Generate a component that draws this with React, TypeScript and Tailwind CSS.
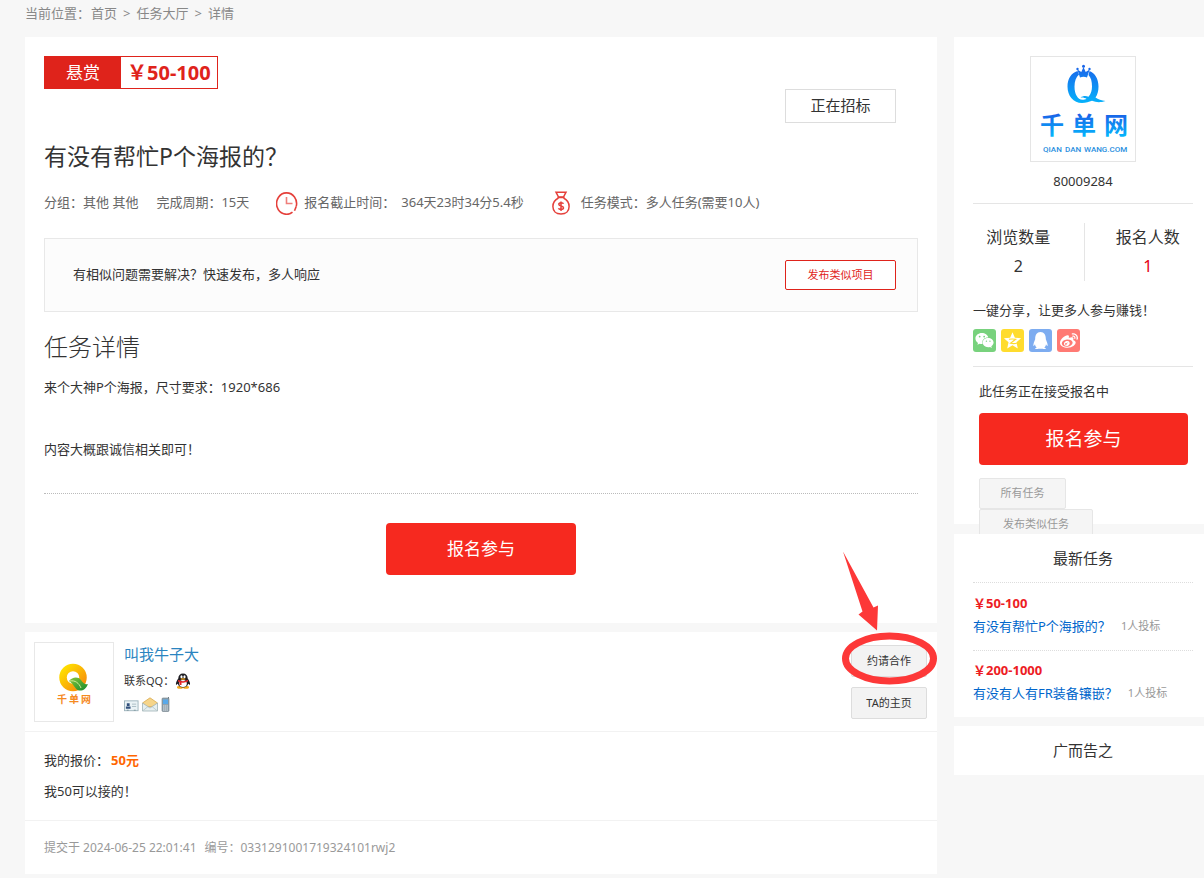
import type { ReactNode } from 'react'
import { FaQq, FaWeibo, FaWeixin } from 'react-icons/fa'

const latestTasks = [
	{ price: '￥50-100', title: '有没有帮忙P个海报的？', bids: '1人投标' },
	{ price: '￥200-1000', title: '有没有人有FR装备镶嵌？', bids: '1人投标' },
]

const BlueLogo = () => (
	<svg viewBox="0 0 104 104" className="size-full" role="img" aria-label="千单网">
		<defs>
			<linearGradient id="blue-q" x1="0" y1="10" x2="0" y2="46" gradientUnits="userSpaceOnUse">
				<stop offset="0" stopColor="#1a66ea" />
				<stop offset="1" stopColor="#06b2fb" />
			</linearGradient>
			<linearGradient id="blue-name" x1="0" y1="56" x2="0" y2="80" gradientUnits="userSpaceOnUse">
				<stop offset="0" stopColor="#1a5ee6" />
				<stop offset="1" stopColor="#04b8fd" />
			</linearGradient>
		</defs>
		<g fill="url(#blue-q)">
			<path d="M46.500 14C40 16 36.500 22 36.500 29.500C36.500 39 42.500 46 51 46C55 46 58 44.800 61 43.800C65 45.300 69 45.800 74.500 44C70.500 43.500 67 42.500 64.500 40.500C66.500 37.500 67.500 34 67.500 29.500C67.500 22 64 16 58.500 14L57.500 18C60 20.500 61 24.500 61 29.500C61 33 60 37 57.500 39.800C55 38.500 52 38.700 49.500 40.500C52 40.200 54 40.800 55.500 41.800C54.500 42.500 53 42.800 51.500 42.800C46.500 42.500 43.500 37 43.500 29.500C43.500 24.500 45 20 48 17.500Z" />
			<path d="M49 20.500L46.300 12.500L50.300 15L52.500 10L54.700 15L58.700 12.500L56 20.500Q52.500 18.800 49 20.500Z" />
			<circle cx="46.500" cy="12" r="1.200" />
			<circle cx="52.500" cy="9.300" r="1.500" />
			<circle cx="58.500" cy="12" r="1.200" />
		</g>
		<g
			fill="url(#blue-name)"
			textAnchor="middle"
			className="font-['Noto_Sans_CJK_SC',sans-serif] text-[24px] font-bold"
		>
			<text x="21" y="77">千</text>
			<text x="53" y="77">单</text>
			<text x="85" y="77">网</text>
		</g>
		<g fill="#2a8fe0" className="font-['Roboto',sans-serif] text-[8px] font-medium">
			<text x="12" y="95">QIAN</text>
			<text x="34" y="95">DAN</text>
			<text x="53" y="95">WANG.COM</text>
		</g>
	</svg>
)

const OrangeLogo = () => (
	<svg viewBox="0 0 78 78" className="size-full" role="img" aria-label="千单网">
		<defs>
			<linearGradient id="orange-ring" x1="0" y1="0" x2="1" y2="1">
				<stop offset="0" stopColor="#ffe100" />
				<stop offset="1" stopColor="#f78c0c" />
			</linearGradient>
			<linearGradient id="leaf" x1="0" y1="0" x2="1" y2="1">
				<stop offset="0" stopColor="#8bc63a" />
				<stop offset="1" stopColor="#138a2e" />
			</linearGradient>
		</defs>
		<circle cx="38" cy="34.500" r="10" fill="none" stroke="url(#orange-ring)" strokeWidth="7.500" />
		<path
			d="M34 38C37 34 43 33 46 37C48 40 50 42 53 41C51 46 48 48 44 47.500C40 47 40 42 34 38Z"
			fill="url(#leaf)"
		/>
		<path d="M35 38C40 37 44 40 46 45" fill="none" stroke="#d2ec9a" strokeWidth="1" />
		<g
			fill="#f58a1f"
			textAnchor="middle"
			className="font-['Noto_Sans_CJK_SC',sans-serif] text-[10px] font-bold"
		>
			<text x="27" y="60">千</text>
			<text x="39" y="60">单</text>
			<text x="51" y="60">网</text>
		</g>
	</svg>
)

const ClockIcon = () => (
	<svg viewBox="0 0 22 24" className="h-6 w-[22px]" fill="none" stroke="#e5403b" strokeWidth="1.600">
		<path d="M20.200 15.500A10 10.700 0 1 0 16.500 21.200" />
		<path d="M18.500 19.800L20.200 15.500" />
		<path d="M10.500 6V12.500H16.500" stroke="#ef7f7b" />
	</svg>
)

const MoneyBagIcon = () => (
	<svg viewBox="0 0 18 24" className="h-6 w-[18px]" fill="none" stroke="#e5403b" strokeWidth="1.500">
		<path d="M6.500 6L4 1.200H14L11.500 6Z" />
		<path d="M5.500 6.500H12.500" />
		<path d="M6.500 7C2.500 9 .9 12 .9 15.500C.9 20 4 23 9 23S17.100 20 17.100 15.500C17.100 12 15.500 9 11.500 7" />
		<path d="M11.500 12.800C11 11.300 6.800 11.200 6.800 13.300C6.800 15.500 11.500 14.500 11.500 16.800C11.500 19 7 18.800 6.500 17.200M9 10.500V20" />
	</svg>
)

const QzoneIcon = () => (
	<svg viewBox="0 0 24 24" className="size-[19px]">
		<path
			fill="#fff"
			d="M12 1.500L15 8.500L22.800 9.200L17 14.300L18.700 22L12 18L5.300 22L7 14.300L1.200 9.200L9 8.500Z"
		/>
		<path d="M7.500 10.500C10 10 13 10 16 10.500L9.500 15.500C12 16 15 16 17.500 15.500" fill="none" stroke="#ffdc2e" strokeWidth="1.400" />
	</svg>
)

const PenguinIcon = () => (
	<svg viewBox="0 0 16 16" className="size-4">
		<ellipse cx="5" cy="14.300" rx="3" ry="1.500" fill="#f6a81c" />
		<ellipse cx="11" cy="14.300" rx="3" ry="1.500" fill="#f6a81c" />
		<path d="M8 .5C5 .5 3.300 2.600 3.300 5.500C1.800 7.500.6 9.800 1 12L2.800 10.800C3.500 13.500 5.500 14.500 8 14.500S12.500 13.500 13.200 10.800L15 12C15.400 9.800 14.200 7.500 12.700 5.500C12.700 2.600 11 .5 8 .5Z" fill="#1d1d22" />
		<ellipse cx="8" cy="10.500" rx="3.800" ry="3.600" fill="#fff" />
		<ellipse cx="6.500" cy="3.800" rx="1.100" ry="1.500" fill="#fff" />
		<ellipse cx="9.500" cy="3.800" rx="1.100" ry="1.500" fill="#fff" />
		<ellipse cx="8" cy="6" rx="2.600" ry=".8" fill="#f6a81c" />
		<path d="M3.200 6.800C6 8.600 10 8.600 12.800 6.800L13.200 8.300C10 10 8 9.800 6.500 9.500V12H4.600V9.200L3 8.400Z" fill="#e3262b" />
	</svg>
)

const IdCardIcon = () => (
	<svg viewBox="0 0 16 12" className="h-3 w-[15px]">
		<rect x=".5" y=".5" width="14.500" height="10.500" fill="#eaf3f6" stroke="#9db4bc" />
		<path d="M3 3H6V6H3ZM2 6.500H7V9H2Z" fill="#31507c" />
		<path d="M8.500 4H13M8.500 6.500H13" stroke="#a9bcc2" />
		<path d="M3 10.500H5M10.500 10.500H12.500" stroke="#7f959d" />
	</svg>
)

const MailIcon = () => (
	<svg viewBox="0 0 16 15" className="h-[15px] w-4">
		<path d="M.5 6L8 .8L15.500 6L12 9.500H4Z" fill="#f6d58a" stroke="#d9a94e" strokeWidth=".8" />
		<path d="M.5 6V14H15.500V6L8 11Z" fill="#e6eff0" stroke="#9fb3b6" strokeWidth=".8" />
		<path d="M.8 13.800L6 9.500M15.200 13.800L10 9.500" stroke="#b4c4c6" strokeWidth=".8" />
	</svg>
)

const PhoneIcon = () => (
	<svg viewBox="0 0 9 15" className="h-[15px] w-[9px]">
		<path d="M7.500 0V3" stroke="#6d7c86" />
		<rect x="1" y="1" width="7" height="13.500" rx="1" fill="#93a3ad" stroke="#6d7c86" strokeWidth=".6" />
		<rect x="2" y="2.500" width="5" height="4.500" fill="#58a9ea" />
		<path d="M2 9H7M2 11H7M2 13H7" stroke="#dfe6ea" strokeWidth=".9" strokeDasharray="1.300 .5" />
	</svg>
)

/* Hand-drawn pointer around the invite button */
const Highlight = () => (
	<svg
		viewBox="0 0 96 136"
		className="pointer-events-none absolute -top-[94px] left-1/2 h-[136px] w-[96px] -translate-x-1/2"
		aria-hidden="true"
	>
		<path d="M2 .5L32.500 56.500L37 54.500L36 79.500L17.500 63.500L21.500 60.500Z" fill="#fd3838" />
		<ellipse cx="48.500" cy="107.500" rx="44" ry="22.500" fill="none" stroke="#fd3838" strokeWidth="7" />
	</svg>
)

const ShareButton = ({ label, color, children }: { label: string; color: string; children: ReactNode }) => (
	<button
		type="button"
		aria-label={label}
		className={`flex size-[23px] items-center justify-center rounded-[3px] text-white ${color}`}
	>
		{children}
	</button>
)

const TaskCard = () => (
	<section className="flex flex-col bg-white px-[19px] pt-[19px] pb-12">
		<div className="flex h-[33px] self-start border border-[#df231b] text-[#df231b]">
			<span className="flex w-[76px] items-center justify-center bg-[#df231b] text-[17px] text-white">悬赏</span>
			<strong className="flex items-center px-[6px] text-[20px] leading-none font-bold">￥50-100</strong>
		</div>
		<button
			type="button"
			className="mr-[22px] h-[34px] w-[111px] self-end border border-[#ddd] pb-[2px] text-[15px] text-[#333]"
		>
			正在招标
		</button>

		<h1 className="mt-4 text-[23px] leading-[34px] text-[#333]">有没有帮忙P个海报的？</h1>

		<div className="mt-[18px] flex h-6 items-center text-[#666]">
			<span>分组：其他 其他</span>
			<span className="ml-[18px]">完成周期：15天</span>
			<span className="ml-[27px] flex items-center gap-[6px]">
				<ClockIcon />
				<span>报名截止时间：</span>
				<span>364天23时34分5.4秒</span>
			</span>
			<span className="ml-7 flex items-center gap-[11px]">
				<MoneyBagIcon />
				任务模式：多人任务(需要10人)
			</span>
		</div>

		<div className="mt-[23px] flex h-[74px] items-center justify-between border border-[#e8e8e8] bg-[#fcfcfc] pr-[21px] pl-7">
			<p>有相似问题需要解决？快速发布，多人响应</p>
			<button
				type="button"
				className="h-[30px] w-[111px] rounded-[2px] border border-[#df231b] bg-white text-[11px] text-[#df231b]"
			>
				发布类似项目
			</button>
		</div>

		<h2 className="mt-[18px] text-[24px] leading-[34px] font-light text-[#333]">任务详情</h2>
		<p className="mt-[13px] leading-[20px]">来个大神P个海报，尺寸要求：1920*686</p>
		<p className="mt-[42px] leading-[20px]">内容大概跟诚信相关即可！</p>
		<hr className="mt-[34px] border-t border-dotted border-[#bbb]" />
		<button
			type="button"
			className="mt-[29px] h-[52px] w-[190px] self-center rounded-[4px] bg-[#f6291f] text-[17px] text-white"
		>
			报名参与
		</button>
	</section>
)

const BidCard = () => (
	<section className="mt-[9px] bg-white">
		<div className="flex items-start border-b border-[#f2f2f2] px-[10px] pt-[10px] pb-[9px]">
			<div className="-ml-px size-20 border border-[#e8e8e8]">
				<OrangeLogo />
			</div>
			<div className="ml-[10px] flex-1">
				<a href="#" className="block text-[15px] leading-6 text-[#2a84c0]">
					叫我牛子大
				</a>
				<p className="mt-[5px] flex h-5 items-center gap-px text-[11px]">
					联系QQ：
					<PenguinIcon />
				</p>
				<div className="mt-[6px] flex h-[15px] items-end gap-[3px]">
					<IdCardIcon />
					<MailIcon />
					<PhoneIcon />
				</div>
			</div>
			<div className="flex flex-col gap-[10px] pt-[3px] text-[11px]">
				<div className="relative">
					<button type="button" className="h-8 w-[76px] rounded-[2px] border border-[#ddd] bg-[#f3f3f3]">
						约请合作
					</button>
					<Highlight />
				</div>
				<button type="button" className="h-8 w-[76px] rounded-[2px] border border-[#ddd] bg-[#f3f3f3]">
					TA的主页
				</button>
			</div>
		</div>
		<div className="border-b border-[#f2f2f2] px-[19px] pt-[18px] pb-[19px]">
			<p className="leading-[20px]">
				我的报价：<strong className="ml-[2px] font-bold text-[#ff6600]">50元</strong>
			</p>
			<p className="mt-[11px] leading-[20px]">我50可以接的！</p>
		</div>
		<p className="flex h-[53px] items-center gap-[8px] px-[19px] text-[12px] text-[#999]">
			<span>提交于 2024-06-25 22:01:41</span>
			<span>编号：0331291001719324101rwj2</span>
		</p>
	</section>
)

const Sidebar = () => (
	<aside className="w-[250px] shrink-0">
		<section className="flow-root bg-white pt-[19px] pr-[11px] pl-[19px]">
			<div className="mx-auto size-[106px] border border-[#e5e5e5]">
				<BlueLogo />
			</div>
			<p className="mt-[9px] text-center leading-[20px]">80009284</p>
			<hr className="mt-3 border-t border-[#e5e5e5]" />

			<dl className="flex pt-[19px] text-center text-[16px] leading-[29px]">
				<div className="flex-1 border-r border-[#e5e5e5] pr-5">
					<dt>浏览数量</dt>
					<dd>2</dd>
				</div>
				<div className="flex-1 pl-[18px]">
					<dt>报名人数</dt>
					<dd className="text-[#e60012]">1</dd>
				</div>
			</dl>

			<p className="mt-[19px] leading-[20px]">一键分享，让更多人参与赚钱！</p>
			<div className="mt-[9px] flex gap-[5px]">
				<ShareButton label="微信" color="bg-[#78d27d]">
					<FaWeixin size={19} />
				</ShareButton>
				<ShareButton label="QQ空间" color="bg-[#ffdc2e]">
					<QzoneIcon />
				</ShareButton>
				<ShareButton label="QQ" color="bg-[#7dacf0]">
					<FaQq size={17} />
				</ShareButton>
				<ShareButton label="微博" color="bg-[#ff7a74]">
					<FaWeibo size={18} />
				</ShareButton>
			</div>
			<hr className="mt-[14px] border-t border-[#e5e5e5]" />

			<div className="-mb-4 pt-[14px] pr-[5px] pl-[6px]">
				<p className="leading-[20px]">此任务正在接受报名中</p>
				<button
					type="button"
					className="mt-3 mb-[13px] h-[52px] w-full rounded-[4px] bg-[#f6291f] text-[19px] text-white"
				>
					报名参与
				</button>
				<div className="flex flex-col items-start text-[11px] text-[#999]">
					<button type="button" className="h-[31px] w-[87px] rounded-[2px] border border-[#e6e6e6] bg-[#f5f5f5]">
						所有任务
					</button>
					<button type="button" className="h-[31px] w-[114px] rounded-[2px] border border-[#e6e6e6] bg-[#f5f5f5]">
						发布类似任务
					</button>
				</div>
			</div>
		</section>

		<section className="relative mt-[10px] bg-white pr-[11px] pl-[19px]">
			<h3 className="py-3 text-center text-[15px] leading-6">最新任务</h3>
			<ul>
				{latestTasks.map((task) => (
					<li
						key={task.title}
						className="border-t border-dotted border-[#ddd] pt-[9px] pb-3 last:pt-[8px]"
					>
						<strong className="block leading-[22px] font-bold text-[#ed1c24]">{task.price}</strong>
						<div className="flex items-center leading-6">
							<a href="#" className="text-[#0066cc]">
								{task.title}
							</a>
							<span className="ml-[10px] text-[11px] text-[#999]">{task.bids}</span>
						</div>
					</li>
				))}
			</ul>
		</section>

		<section className="mt-[9px] bg-white pr-[11px] pl-[19px]">
			<h3 className="py-3 text-center text-[15px] leading-[25px]">广而告之</h3>
		</section>
	</aside>
)

const App = () => (
	<div className="min-h-screen bg-[#f7f7f7] pb-1 pl-[25px] font-['Noto_Sans','Noto_Sans_CJK_SC',sans-serif] text-[13px] text-[#333]">
		<nav className="flex h-[37px] pt-[3px] leading-[20px] text-[#888]">
			<span>当前位置：</span>
			<div className="flex gap-[6px] pl-px">
				<a href="#">首页</a>
				<span>&gt;</span>
				<a href="#">任务大厅</a>
				<span>&gt;</span>
				<span>详情</span>
			</div>
		</nav>
		<div className="flex items-start gap-[17px]">
			<main className="min-w-0 flex-1">
				<TaskCard />
				<BidCard />
			</main>
			<Sidebar />
		</div>
	</div>
)

export default App
